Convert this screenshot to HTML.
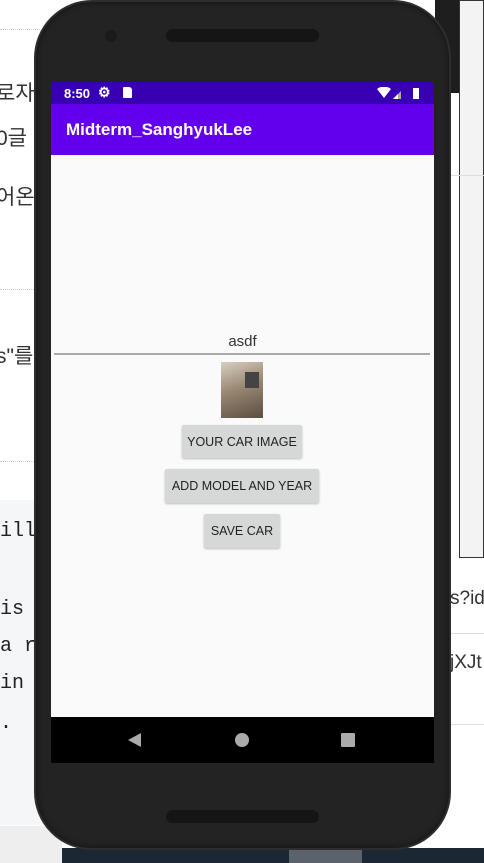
<!DOCTYPE html><html><head><style>
*{margin:0;padding:0;box-sizing:border-box}
body{width:484px;height:863px;overflow:hidden;position:relative;background:#fff;font-family:"Liberation Sans","Noto Sans CJK KR",sans-serif}
.a{position:absolute;white-space:nowrap}
.btn{position:absolute;background:#d6d7d7;color:#222;font-size:12.5px;display:flex;align-items:center;justify-content:center;border-radius:2px;box-shadow:0 1px 2px rgba(0,0,0,.25)}
.k{font-size:21px;color:#333}
.m{font-family:"Liberation Mono",monospace;font-size:20px;color:#222}
</style></head><body>
<div class="a" style="left:0;top:29px;width:40px;border-top:1px dotted #ccc"></div>
<div class="a" style="left:0;top:289px;width:40px;border-top:1px dotted #ccc"></div>
<div class="a" style="left:0;top:461px;width:40px;border-top:1px dotted #ccc"></div>
<div class="a k" style="left:-4px;top:77px">로자</div>
<div class="a k" style="left:-4px;top:122px">0글</div>
<div class="a k" style="left:-4px;top:181px">어온</div>
<div class="a k" style="left:-4px;top:340px">s"를</div>
<div class="a" style="left:0;top:500px;width:40px;height:325px;background:#f5f6f8"></div>
<div class="a m" style="left:0;top:520px">ill</div>
<div class="a m" style="left:0;top:598px"> is</div>
<div class="a m" style="left:0;top:635px">a r</div>
<div class="a m" style="left:0;top:672px">in</div>
<div class="a m" style="left:0;top:712px">.</div>
<div class="a" style="left:0;top:826px;width:62px;height:37px;background:#eee"></div>
<div class="a" style="left:62px;top:848px;width:422px;height:15px;background:#1c2734"></div>
<div class="a" style="left:289px;top:848px;width:73px;height:15px;background:#5a636c"></div>
<div class="a" style="left:435px;top:0;width:49px;height:93px;background:#1e1e1e"></div>
<div class="a" style="left:459px;top:0;width:25px;height:558px;background:#f3f3f3;border:1px solid #333"></div>
<div class="a" style="left:450px;top:175px;width:34px;border-top:1px solid #ddd"></div>
<div class="a" style="left:450px;top:578px;width:34px;height:56px;border-bottom:1px solid #ddd;font-size:19px;color:#333;padding-top:10px;overflow:hidden">s?id</div>
<div class="a" style="left:450px;top:652px;width:34px;height:73px;border-bottom:1px solid #ddd;font-size:19px;color:#333;overflow:hidden">jXJt</div>
<div class="a" style="left:34px;top:0;width:417px;height:850px;background:#232323;border-radius:58px;border:2px solid #2e2e2e;box-shadow:inset 0 0 6px #111"></div>
<div class="a" style="left:105px;top:30px;width:12px;height:12px;border-radius:50%;background:#1a1a1a"></div>
<div class="a" style="left:166px;top:29px;width:153px;height:13px;border-radius:7px;background:#151515"></div>
<div class="a" style="left:166px;top:810px;width:153px;height:13px;border-radius:7px;background:#151515"></div>
<div class="a" style="left:51px;top:82px;width:383px;height:22px;background:#3700b3;color:#fff;font-size:13px;font-weight:bold">
<span class="a" style="left:13px;top:4px">8:50</span>
<span class="a" style="left:47px;top:2px;font-size:14px">⚙</span>
<span class="a" style="left:72px;top:5px;width:9px;height:11px;background:#fff;border-radius:1px 3px 1px 1px"></span>
<svg class="a" style="left:326px;top:5px" width="50" height="13"><path d="M0 2 Q7 -3 14 2 L7 11Z" fill="#fff"/><path d="M16 12 L24 4 L24 12Z" fill="#aaa"/><path d="M16 12 L21 7 L21 12Z" fill="#fff"/><rect x="36" y="1" width="6" height="11" fill="#fff"/></svg>
</div>
<div class="a" style="left:51px;top:104px;width:383px;height:51px;background:#6200ee;color:#fff;font-size:17px;font-weight:bold;padding:16px 0 0 15px;box-shadow:0 2px 3px rgba(0,0,0,.2)">Midterm_SanghyukLee</div>
<div class="a" style="left:51px;top:155px;width:383px;height:562px;background:#fafafa"></div>
<div class="a" style="left:51px;top:333px;width:383px;text-align:center;font-size:15px;color:#333">asdf</div>
<div class="a" style="left:54px;top:353px;width:376px;height:2px;background:#aaa"></div>
<div class="a" style="left:221px;top:362px;width:42px;height:56px;background:linear-gradient(160deg,#d8d0c2 0%,#9a8873 45%,#5a4d42 100%)"><div class="a" style="left:24px;top:10px;width:14px;height:16px;background:#444"></div></div>
<div class="btn" style="left:182px;top:425px;width:120px;height:33px">YOUR CAR IMAGE</div>
<div class="btn" style="left:165px;top:469px;width:154px;height:34px">ADD MODEL AND YEAR</div>
<div class="btn" style="left:204px;top:514px;width:76px;height:34px">SAVE CAR</div>
<div class="a" style="left:51px;top:717px;width:383px;height:46px;background:#000">
<svg class="a" style="left:77px;top:15px" width="230" height="16"><path d="M0 8 L13 1 L13 15Z" fill="#aaa"/><circle cx="114" cy="8" r="7" fill="#aaa"/><rect x="213" y="1" width="14" height="14" rx="1" fill="#aaa"/></svg>
</div>
</body></html>
